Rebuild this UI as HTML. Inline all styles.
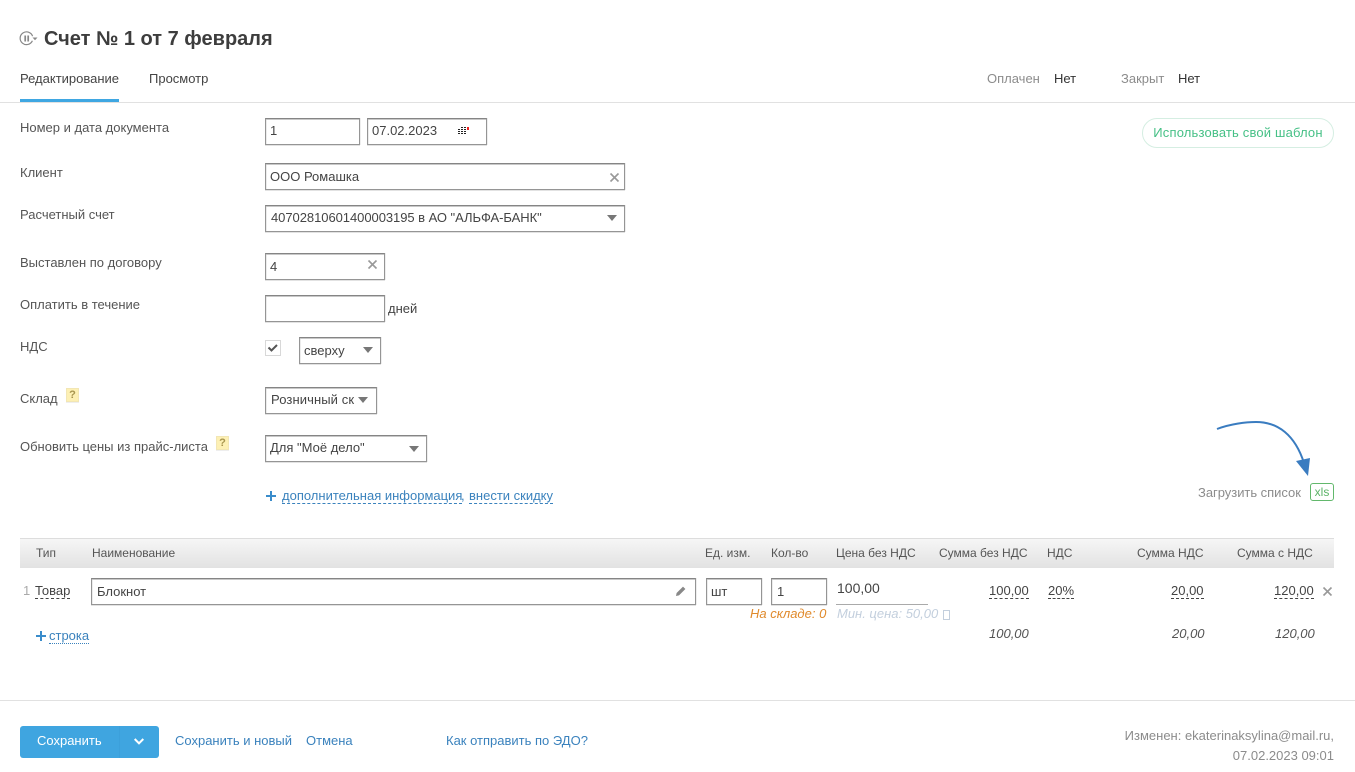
<!DOCTYPE html>
<html lang="ru"><head><meta charset="utf-8"><title>Счет № 1 от 7 февраля</title>
<style>
html,body{margin:0;padding:0;background:#fff}
body{position:relative;width:1355px;height:772px;overflow:hidden;font:13px/16px "Liberation Sans",Arial,sans-serif;color:#444}
.t{position:absolute;white-space:nowrap}
.r{text-align:right}
.l{color:#555}
.b{position:absolute;box-sizing:border-box;background:#fff;border:1px solid #959595;border-top-color:#858585;box-shadow:inset 0 1px 0 #c8c8c8,inset 1px 0 0 #ececec,0 1px 0 #e2e2e2,1px 0 0 #eee;white-space:nowrap;overflow:hidden;padding-top:5px}
.arr{position:absolute;width:0;height:0;border-left:5px solid transparent;border-right:5px solid transparent;border-top:6px solid #777}
.line{position:absolute;background:#e1e1e1;height:1px;left:0;width:1355px}
.q{position:absolute;width:13px;height:14px;box-sizing:border-box;background:#fdf0b4;border:1px solid #f2e6b4;box-shadow:0 1px 0 #eee;color:#a8954f;font:bold 11px/12px "Liberation Sans",sans-serif;text-align:center}
.d{border-bottom:1px dashed #444;line-height:15px}
.h{color:#555;font-size:12px}
.i{font-style:italic;color:#555}
a{color:#3a82bd;text-decoration:none}
.lk{position:absolute;color:#3a82bd;white-space:nowrap}
svg{position:absolute;overflow:visible}
</style></head>
<body>
<svg style="left:20px;top:30px" width="18" height="16" fill="none"><path d="M12.4 10.8A6.4 6.4 0 1 1 12.6 6.2" stroke="#888" stroke-width="1.2"/><path d="M5.2 5.5v6M8.2 5.5v6" stroke="#888" stroke-width="1.7"/><path d="M12.5 7.5h5l-2.5 2.8z" fill="#888"/></svg>
<div class="t" style="left:44px;top:27px;font-size:20px;line-height:24px;font-weight:bold;color:#3d3d3d">Счет № 1 от 7 февраля</div>
<div class="t" style="left:20px;top:71px;color:#444">Редактирование</div>
<div class="t" style="left:149px;top:71px;color:#444">Просмотр</div>
<div style="position:absolute;left:20px;top:99px;width:99px;height:3px;background:#3fa7e2"></div>
<div class="line" style="top:102px"></div>
<div class="t" style="left:987px;top:71px;color:#8c8c8c">Оплачен</div>
<div class="t" style="left:1054px;top:71px;color:#333">Нет</div>
<div class="t" style="left:1121px;top:71px;color:#8c8c8c">Закрыт</div>
<div class="t" style="left:1178px;top:71px;color:#333">Нет</div>
<div class="t" style="left:1142px;top:118px;width:192px;height:30px;box-sizing:border-box;border:1px solid #d5eee2;border-radius:15px;color:#46c086;text-align:center;line-height:28px;letter-spacing:.17px">Использовать свой шаблон</div>

<div class="t l" style="left:20px;top:120px">Номер и дата документа</div>
<div class="t l" style="left:20px;top:165px">Клиент</div>
<div class="t l" style="left:20px;top:207px">Расчетный счет</div>
<div class="t l" style="left:20px;top:255px">Выставлен по договору</div>
<div class="t l" style="left:20px;top:297px">Оплатить в течение</div>
<div class="t l" style="left:20px;top:339px">НДС</div>
<div class="t l" style="left:20px;top:391px">Склад</div>
<div class="q" style="left:66px;top:388px">?</div>
<div class="t l" style="left:20px;top:439px">Обновить цены из прайс-листа</div>
<div class="q" style="left:216px;top:436px">?</div>

<div class="b" style="left:265px;top:118px;width:95px;height:27px;padding:4px 0 0 4px">1</div>
<div class="b" style="left:367px;top:118px;width:120px;height:27px;padding:4px 0 0 4px">07.02.2023</div>
<svg style="left:458px;top:127px" width="11" height="9"><g fill="#222"><rect x="0" y="4" width="2" height="1"/><rect x="3" y="4" width="2" height="1"/><rect x="6" y="4" width="2" height="1"/><rect x="0" y="6" width="2" height="1"/><rect x="3" y="6" width="2" height="1"/><rect x="6" y="6" width="2" height="1"/><rect x="3" y="2" width="2" height="1"/><rect x="6" y="2" width="2" height="1"/><rect x="0" y="2" width="2" height="1"/><rect x="3" y="0" width="2" height="1"/><rect x="6" y="0" width="2" height="1"/></g><rect x="9" y="0" width="2" height="3" fill="#e22"/></svg>

<div class="b" style="left:265px;top:163px;width:360px;height:27px;padding-left:4px">ООО Ромашка</div>
<svg style="left:610px;top:173px" width="9" height="9"><path d="M.5 .5l8 8M8.5 .5l-8 8" stroke="#999" stroke-width="1.6"/></svg>
<div class="b" style="left:265px;top:205px;width:360px;height:27px;padding:4px 0 0 5px;letter-spacing:-.05px">40702810601400003195 в АО "АЛЬФА-БАНК"</div>
<div class="arr" style="left:607px;top:215px"></div>

<div class="b" style="left:265px;top:253px;width:120px;height:27px;padding-left:4px">4</div>
<svg style="left:368px;top:260px" width="9" height="9"><path d="M.5 .5l8 8M8.5 .5l-8 8" stroke="#999" stroke-width="1.6"/></svg>
<div class="b" style="left:265px;top:295px;width:120px;height:27px"></div>
<div class="t" style="left:388px;top:301px;color:#444">дней</div>

<div style="position:absolute;left:265px;top:340px;width:16px;height:16px;box-sizing:border-box;border:1px solid #d8d8d8;background:#fff"></div>
<svg style="left:267px;top:343px" width="12" height="10" fill="none"><path d="M1.5 4.5l3 3 5.500-5.500" stroke="#555" stroke-width="2"/></svg>
<div class="b" style="left:299px;top:337px;width:82px;height:27px;padding-left:4px">сверху</div>
<div class="arr" style="left:363px;top:347px"></div>

<div class="b" style="left:265px;top:387px;width:112px;height:27px;padding:4px 0 0 5px;letter-spacing:.1px">Розничный ск</div>
<div class="arr" style="left:358px;top:397px"></div>
<div class="b" style="left:265px;top:435px;width:162px;height:27px;padding:4px 0 0 4px">Для "Моё дело"</div>
<div class="arr" style="left:409px;top:446px"></div>

<svg style="left:266px;top:491px" width="10" height="10"><path d="M5 0v10M0 5h10" stroke="#3a8ccb" stroke-width="2"/></svg>
<div class="lk" style="left:282px;top:488px;border-bottom:1px dashed #3a82bd;line-height:15px">дополнительная информация</div>
<div class="lk" style="left:461px;top:488px">,</div>
<div class="lk" style="left:469px;top:488px;border-bottom:1px dashed #3a82bd;line-height:15px">внести скидку</div>

<svg style="left:1216px;top:421px" width="100" height="60" fill="none"><path d="M1 8C14 3 30 1 40 1C62 1 79 14 88 42" stroke="#3a7cc0" stroke-width="2"/><path d="M80 40L94 37L92 55z" fill="#3a7cc0"/></svg>
<div class="t" style="left:1198px;top:485px;font-size:13px;color:#8c8c8c;letter-spacing:-.03px">Загрузить список</div>
<div class="t" style="left:1310px;top:483px;width:24px;height:18px;box-sizing:border-box;border:1px solid #62b86c;border-radius:3px;color:#5db368;font-size:12px;line-height:16px;text-align:center">xls</div>

<div style="position:absolute;left:20px;top:538px;width:1314px;height:30px;box-sizing:border-box;border-top:1px solid #ddd;background:linear-gradient(#f6f6f6,#e2e2e2)"></div>
<div class="t h" style="left:36px;top:545px">Тип</div>
<div class="t h" style="left:92px;top:545px">Наименование</div>
<div class="t h" style="left:705px;top:545px">Ед. изм.</div>
<div class="t h" style="left:771px;top:545px">Кол-во</div>
<div class="t h" style="left:836px;top:545px">Цена без НДС</div>
<div class="t h" style="left:939px;top:545px">Сумма без НДС</div>
<div class="t h" style="left:1047px;top:545px">НДС</div>
<div class="t h" style="left:1137px;top:545px">Сумма НДС</div>
<div class="t h" style="left:1237px;top:545px">Сумма с НДС</div>

<div class="t" style="left:23px;top:583px;color:#aaa">1</div>
<div class="t d" style="left:35px;top:583px">Товар</div>
<div class="b" style="left:91px;top:578px;width:605px;height:27px;padding-left:5px">Блокнот</div>
<svg style="left:675px;top:585px" width="12" height="12"><path d="M1 11l.6-3L8 1.6l2.4 2.4L4 10.4z" fill="#888"/></svg>
<div class="b" style="left:706px;top:578px;width:56px;height:27px;padding-left:4px">шт</div>
<div class="b" style="left:771px;top:578px;width:56px;height:27px;padding-left:5px">1</div>
<div class="t" style="left:837px;top:580px;font-size:14px;color:#444">100,00</div>
<div style="position:absolute;left:836px;top:604px;width:92px;height:1px;background:#aaa"></div>
<div class="t" style="left:750px;top:606px;font-style:italic;color:#e08a2c">На складе: 0</div>
<div class="t" style="left:837px;top:606px;font-style:italic;color:#c3cfdd">Мин. цена: 50,00</div>
<div style="position:absolute;left:943px;top:610px;width:5px;height:8px;border:1px solid #c3cfdd"></div>

<div class="t d r" style="left:989px;top:583px">100,00</div>
<div class="t d" style="left:1048px;top:583px">20%</div>
<div class="t d r" style="left:1171px;top:583px">20,00</div>
<div class="t d r" style="left:1274px;top:583px">120,00</div>
<svg style="left:1323px;top:587px" width="9" height="9"><path d="M.5 .5l8 8M8.5 .5l-8 8" stroke="#999" stroke-width="1.6"/></svg>

<svg style="left:36px;top:631px" width="10" height="10"><path d="M5 0v10M0 5h10" stroke="#3a8ccb" stroke-width="2"/></svg>
<div class="lk" style="left:49px;top:628px;font-size:13px;border-bottom:1px dotted #3a82bd;line-height:15px">строка</div>
<div class="t i" style="left:989px;top:626px">100,00</div>
<div class="t i" style="left:1172px;top:626px">20,00</div>
<div class="t i" style="left:1275px;top:626px">120,00</div>

<div class="line" style="top:700px"></div>
<div style="position:absolute;left:20px;top:726px;width:139px;height:32px;background:#3fa5e0;border-radius:3px"></div>
<div style="position:absolute;left:119px;top:726px;width:1px;height:32px;background:#3ca0db"></div>
<div class="t" style="left:37px;top:733px;color:#fff">Сохранить</div>
<svg style="left:134px;top:738px" width="10" height="7" fill="none"><path d="M.7 1l4.3 4.3L9.3 1" stroke="#fff" stroke-width="2"/></svg>
<div class="lk" style="left:175px;top:733px">Сохранить и новый</div>
<div class="lk" style="left:306px;top:733px">Отмена</div>
<div class="lk" style="left:446px;top:733px">Как отправить по ЭДО?</div>
<div class="t r" style="right:21px;top:726px;color:#8c8c8c;line-height:20px">Изменен: ekaterinaksylina@mail.ru,<br>07.02.2023 09:01</div>
</body></html>
